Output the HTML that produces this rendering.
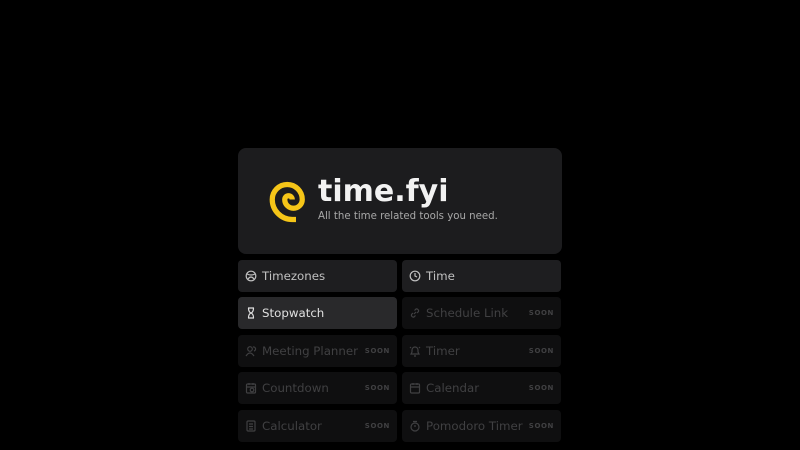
<!DOCTYPE html>
<html><head><style>
body{margin:0;background:#000;width:800px;height:450px;font-family:"DejaVu Sans","Liberation Sans",sans-serif;position:relative;overflow:hidden}
.card{position:absolute;left:238px;top:148px;width:324px;height:106px;background:#1c1c1e;border-radius:8px}
.t{position:absolute;left:318px;top:174px;font-size:30px;font-weight:bold;color:#f2f2f2}
.s{position:absolute;left:318px;top:211px;font-size:10.2px;color:#a8a8a8}
.b{position:absolute;width:159px;height:32px;border-radius:4px;background:#1e1e20;color:#c0c0c0;font-size:11.8px;box-sizing:border-box;padding-left:24px;line-height:32px}
.b.d{background:#0f0f10;color:#404042}
.b.h{background:#29292b;color:#e0e0e0}
.b svg{position:absolute;left:7px;top:10px}
.so{position:absolute;right:7px;top:0;font-size:7px;font-weight:bold;letter-spacing:0.6px;color:#404042}
</style></head><body>
<div class="card"></div>
<svg style="position:absolute;left:261px;top:172px" width="55" height="55" viewBox="0 0 44 44"><path d="M25,22 A3,3 0 0 0 19,22 A7,7 0 0 0 33,22 A12,12 0 0 0 9,22 A16,16 0 0 0 25,38 L28,38" fill="none" stroke="#f5c518" stroke-width="4.2"/></svg>
<div class="t">time.fyi</div>
<div class="s">All the time related tools you need.</div>

<div class="b" style="left:238px;top:260px"><svg width="12" height="12" viewBox="0 0 12 12" fill="none" stroke="#c0c0c0" stroke-width="1.2"><circle cx="6" cy="6" r="4.8"/><path d="M2,4 Q6,6 10,4 M3,9 Q6,5 9,9"/></svg>Timezones</div>
<div class="b" style="left:402px;top:260px"><svg width="12" height="12" viewBox="0 0 12 12" fill="none" stroke="#c0c0c0" stroke-width="1.2"><circle cx="6" cy="6" r="4.8"/><path d="M6,3V6L8,7"/></svg>Time</div>
<div class="b h" style="left:238px;top:297px"><svg width="12" height="12" viewBox="0 0 12 12" fill="none" stroke="#e0e0e0" stroke-width="1.2"><path d="M3,1H9M3,11H9M3.5,1Q3.5,5 6,6Q8.5,7 8.5,11M8.5,1Q8.5,5 6,6Q3.5,7 3.5,11"/></svg>Stopwatch</div>
<div class="b d" style="left:402px;top:297px"><svg width="12" height="12" viewBox="0 0 12 12" fill="none" stroke="#404042" stroke-width="1.2"><path d="M5,7L7,5M4,6L2.5,7.5A2,2 0 0 0 5,10L6.5,8.5M8,6L9.5,4.5A2,2 0 0 0 7,2L5.5,3.5"/></svg>Schedule Link<span class="so">SOON</span></div>
<div class="b d" style="left:238px;top:335px"><svg width="12" height="12" viewBox="0 0 12 12" fill="none" stroke="#404042" stroke-width="1.2"><circle cx="5" cy="4" r="2.3"/><path d="M1,11Q5,5 9,11M8,2A2,2 0 0 1 9,6"/></svg>Meeting Planner<span class="so">SOON</span></div>
<div class="b d" style="left:402px;top:335px"><svg width="12" height="12" viewBox="0 0 12 12" fill="none" stroke="#404042" stroke-width="1.2"><path d="M2,9H10L9,7V5A3,3 0 0 0 3,5V7ZM5,11H7M1,2L2,3M11,2L10,3"/></svg>Timer<span class="so">SOON</span></div>
<div class="b d" style="left:238px;top:372px"><svg width="12" height="12" viewBox="0 0 12 12" fill="none" stroke="#404042" stroke-width="1.2"><rect x="1.5" y="2" width="9" height="9" rx="1"/><path d="M1.5,5H10.5M4,1V3M8,1V3"/><circle cx="7" cy="8" r="1.8"/></svg>Countdown<span class="so">SOON</span></div>
<div class="b d" style="left:402px;top:372px"><svg width="12" height="12" viewBox="0 0 12 12" fill="none" stroke="#404042" stroke-width="1.2"><rect x="1.5" y="2" width="9" height="9" rx="1"/><path d="M1.5,5H10.5M4,1V3M8,1V3"/></svg>Calendar<span class="so">SOON</span></div>
<div class="b d" style="left:238px;top:410px"><svg width="12" height="12" viewBox="0 0 12 12" fill="none" stroke="#404042" stroke-width="1.2"><rect x="2" y="1" width="8" height="10" rx="1"/><path d="M4,4H8M4,6.5H8M4,9H8"/></svg>Calculator<span class="so">SOON</span></div>
<div class="b d" style="left:402px;top:410px"><svg width="12" height="12" viewBox="0 0 12 12" fill="none" stroke="#404042" stroke-width="1.2"><circle cx="6" cy="7" r="4"/><path d="M6,7V5M4,1.5H8"/></svg>Pomodoro Timer<span class="so">SOON</span></div>
</body></html>
